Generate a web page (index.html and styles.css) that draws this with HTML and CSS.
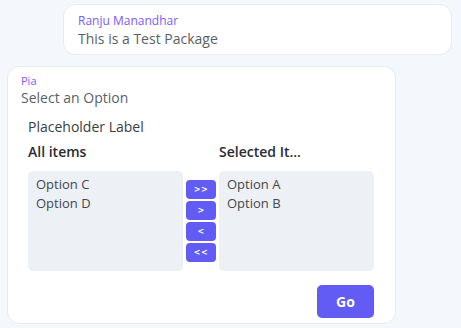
FILE: index.html
```html
<!DOCTYPE html>
<html>
<head>
<meta charset="utf-8">
<link rel="stylesheet" href="styles.css">
</head>
<body>
<div class="chat">
  <div class="bubble user">
    <div class="name">Ranju Manandhar</div>
    <div class="msg">This is a Test Package</div>
  </div>
  <div class="bubble bot">
    <div class="name">Pia</div>
    <div class="msg">Select an Option</div>
    <div class="picker">
      <div class="label">Placeholder Label</div>
      <div class="lists">
        <div class="head">All items</div>
        <div></div>
        <div class="head">Selected It...</div>
        <div class="box">
          <div class="opt">Option C</div>
          <div class="opt">Option D</div>
        </div>
        <div class="moves">
          <button class="mv">&gt;&gt;</button>
          <button class="mv">&gt;</button>
          <button class="mv">&lt;</button>
          <button class="mv">&lt;&lt;</button>
        </div>
        <div class="box">
          <div class="opt">Option A</div>
          <div class="opt">Option B</div>
        </div>
      </div>
      <div class="actions">
        <button class="go">Go</button>
      </div>
    </div>
  </div>
</div>
</body>
</html>
```
FILE: styles.css
```css
* { box-sizing: border-box; }
html, body { margin: 0; padding: 0; }
body {
  background: #f4f7fb;
  font-family: "Open Sans", "Liberation Sans", sans-serif;
  width: 461px;
  height: 328px;
  overflow: hidden;
}
.chat {
  display: flex;
  flex-direction: column;
  gap: 11px;
  padding: 4px 9px 0 7px;
}
.bubble {
  width: 389px;
  background: #ffffff;
  border: 1px solid #e6ebf2;
  border-radius: 12px;
}
.user {
  align-self: flex-end;
  height: 51px;
  padding: 7px 14px 0 14px;
}
.bot {
  align-self: flex-start;
  height: 258px;
  padding: 6px 21px 0 13px;
}
.name {
  color: #7b5cf7;
  font-size: 11px;
  line-height: 15px;
}
.user .name { font-size: 12px; line-height: 17px; }
.msg {
  color: #5a5f66;
  font-size: 14px;
  line-height: 20px;
}
.picker {
  padding-left: 7px;
  margin-top: 9px;
}
.label {
  color: #3a3d42;
  font-size: 14px;
  line-height: 20px;
}
.lists {
  margin-top: 5px;
  display: grid;
  grid-template-columns: 155px 30px 155px;
  column-gap: 3px;
  align-items: center;
}
.head {
  font-weight: 600;
  font-size: 14px;
  line-height: 20px;
  color: #2a2c30;
  margin-bottom: 9px;
  align-self: start;
  white-space: nowrap;
}
.box {
  height: 100px;
  background: #edf1f5;
  border-radius: 5px;
  padding: 4px 8px;
}
.opt {
  color: #44474d;
  font-size: 13px;
  line-height: 19px;
}
.moves {
  display: flex;
  flex-direction: column;
  gap: 2px;
  padding-bottom: 1px;
}
.mv {
  height: 19px;
  width: 30px;
  border: none;
  border-radius: 4px;
  background: #625cf5;
  color: #ffffff;
  font-family: "DejaVu Sans", sans-serif;
  font-weight: 700;
  font-size: 8px;
  letter-spacing: 0.5px;
  padding: 0;
}
.actions {
  display: flex;
  justify-content: flex-end;
  margin-top: 14px;
}
.go {
  width: 57px;
  height: 33px;
  border: none;
  border-radius: 5px;
  background: #625cf5;
  color: #ffffff;
  font-family: "Open Sans", "Liberation Sans", sans-serif;
  font-weight: 700;
  font-size: 14px;
  padding: 0;
}
```
